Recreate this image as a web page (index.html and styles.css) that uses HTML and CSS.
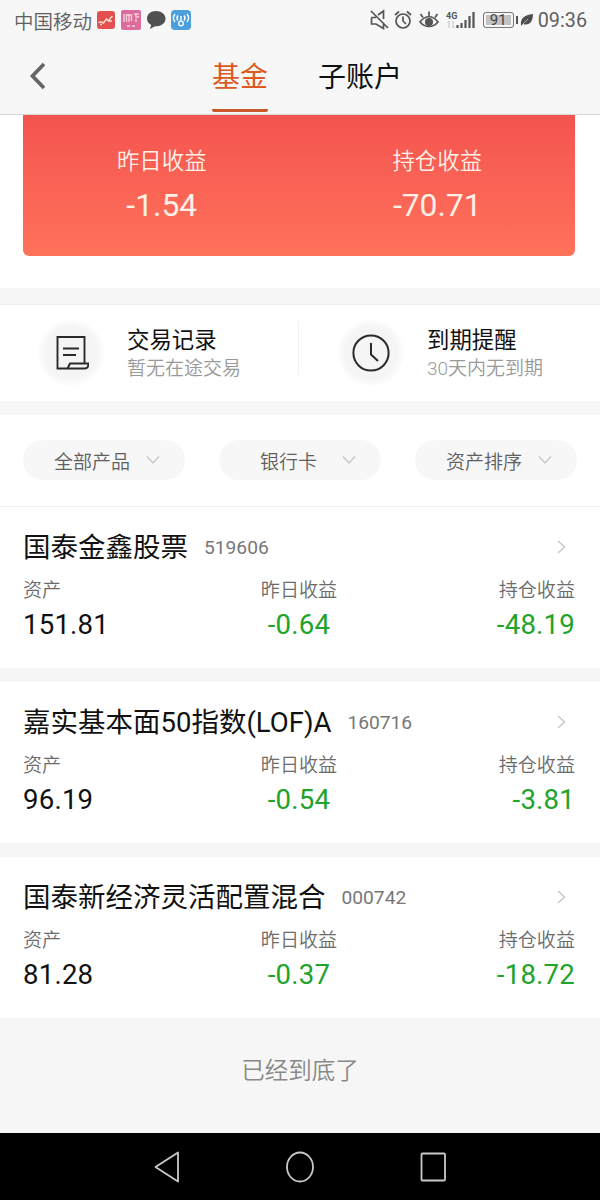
FILE: index.html
```html
<!DOCTYPE html>
<html lang="zh-CN">
<head>
  <meta charset="UTF-8">
  <meta name="viewport" content="width=device-width, initial-scale=1.0">
  <title>基金</title>
  <link rel="stylesheet" href="styles.css">
</head>
<body>
  <div class="status-bar">
    <span class="carrier">中国移动</span>
    <svg class="app-icons" width="96" height="22" viewBox="0 0 96 22">
      <rect x="1" y="2" width="18" height="18" rx="3" fill="#e4504f"/>
      <path d="M2.500 13.500l3-.5 2 1 3-4 2 2 2-3 2-2M4 15.500h2M13 12h3" fill="none" stroke="#ffd9c9" stroke-width="1.500"/>
      <rect x="25" y="1" width="20" height="20" rx="2" fill="#dc6c9b"/>
      <path d="M28 5v8M30.500 5v8M33 5v8M30.500 6h5v6M38 5h5M40 5v3h3M40 10v3M31 17h3M36 17h3" fill="none" stroke="#f7cbdc" stroke-width="1.400"/>
      <path d="M60 2c-5.500 0-9 3.500-9 7.500 0 3 1.800 5.200 4.200 6.500L54 20l5-2.700c6 .4 10.500-3 10.500-7.800C69.500 5.500 65.500 2 60 2z" fill="#505050"/>
      <rect x="75" y="1" width="20" height="20" rx="4" fill="#4b9fdd"/>
      <path d="M79 5c-2 2.500-2 5.500 0 8M82 6.500c-1.200 1.500-1.200 3.500 0 5M91 5c2 2.500 2 5.500 0 8M88 6.500c1.200 1.500 1.200 3.500 0 5M85 7v5" fill="none" stroke="#fff" stroke-width="1.400"/>
      <circle cx="85" cy="14.500" r="2.300" fill="none" stroke="#fff" stroke-width="1.300"/>
    </svg>
    <div class="status-right">
      <svg width="110" height="22" viewBox="0 0 110 22" fill="none" stroke="#555" stroke-width="1.700">
        <path d="M4 2l17 17M4.500 8.500v6.500H9l7.500 4.500v-5M4.500 8.500H9M11 6l5.500-4v8"/>
        <circle cx="36" cy="12" r="7"/>
        <path d="M36 7.500V12l3 3M28 6l4-3.500M44 6l-4-3.500"/>
        <path d="M53 13c5-7 13-7 18 0-5 6-13 6-18 0zM62 7V2.500M56 8.500L53.500 5M68 8.500L70.500 5"/>
        <circle cx="62" cy="13" r="3.200" fill="#555"/>
        <path d="M90.500 19v-3M94.500 19v-5M98.500 19v-8M102.500 19V7M106.500 19V3" stroke-width="2.200"/>
        <text class="network" x="79" y="9.500">4G</text>
        <path d="M82 12v7M80.500 14l1.500-2M86 12v7M87.500 17L86 19" stroke="#c4c4c4" stroke-width="1"/>
      </svg>
      <span class="battery">91</span>
      <svg class="leaf" width="14" height="14" viewBox="0 0 14 14">
        <path d="M1 13C0 5 4 2 13 1c0 8-4 12-10 10z" fill="#505050"/>
        <path d="M2 12l6-6" stroke="#d0d0d0" stroke-width=".7"/>
      </svg>
      <span class="clock">09:36</span>
    </div>
  </div>

  <header class="header">
    <svg class="back" width="20" height="30" viewBox="0 0 20 30">
      <path d="M17 3L5.500 15 17 27" fill="none" stroke="#666" stroke-width="3.800"/>
    </svg>
    <nav class="tabs">
      <a class="tab active">基金</a>
      <a class="tab">子账户</a>
    </nav>
  </header>

  <section class="summary">
    <div class="summary-card">
      <div class="summary-item">
        <div class="summary-label">昨日收益</div>
        <div class="summary-value">-1.54</div>
      </div>
      <div class="summary-item">
        <div class="summary-label">持仓收益</div>
        <div class="summary-value">-70.71</div>
      </div>
    </div>
  </section>

  <section class="tools">
    <div class="tool">
      <div class="tool-icon">
        <svg width="36" height="36" viewBox="0 0 36 36" fill="none" stroke="#2b2b2b" stroke-width="1.900">
          <path d="M14 33.500H4.500V2h27v26.500M10 13.500h16M10 20h13M14.500 33.500l2.500-5h18.500c0 3-1.500 5-4 5z"/>
        </svg>
      </div>
      <div class="tool-text">
        <div class="tool-title">交易记录</div>
        <div class="tool-sub">暂无在途交易</div>
      </div>
    </div>
    <div class="tool">
      <div class="tool-icon">
        <svg width="40" height="40" viewBox="0 0 40 40" fill="none" stroke="#2b2b2b" stroke-width="2">
          <circle cx="20" cy="20" r="17.600"/>
          <path d="M20 10v11.500l7 6.500"/>
        </svg>
      </div>
      <div class="tool-text">
        <div class="tool-title">到期提醒</div>
        <div class="tool-sub">30天内无到期</div>
      </div>
    </div>
  </section>

  <section class="filters">
    <div class="filter">全部产品<svg class="down" width="14" height="10" viewBox="0 0 14 10"><path d="M1 1.500l6 6.500 6-6.500"/></svg></div>
    <div class="filter filter-card">银行卡<svg class="down" width="14" height="10" viewBox="0 0 14 10"><path d="M1 1.500l6 6.500 6-6.500"/></svg></div>
    <div class="filter">资产排序<svg class="down" width="14" height="10" viewBox="0 0 14 10"><path d="M1 1.500l6 6.500 6-6.500"/></svg></div>
  </section>

  <main class="funds">
    <article class="fund">
      <div class="fund-head">
        <span class="fund-name">国泰金鑫股票</span>
        <span class="fund-code">519606</span>
        <svg class="more" width="9" height="14" viewBox="0 0 9 14"><path d="M1 1l6.500 6L1 13"/></svg>
      </div>
      <div class="fund-row">
        <div class="cell"><span class="label">资产</span><span class="value">151.81</span></div>
        <div class="cell"><span class="label">昨日收益</span><span class="value down-value">-0.64</span></div>
        <div class="cell"><span class="label">持仓收益</span><span class="value down-value">-48.19</span></div>
      </div>
    </article>

    <article class="fund">
      <div class="fund-head">
        <span class="fund-name">嘉实基本面50指数(LOF)A</span>
        <span class="fund-code">160716</span>
        <svg class="more" width="9" height="14" viewBox="0 0 9 14"><path d="M1 1l6.500 6L1 13"/></svg>
      </div>
      <div class="fund-row">
        <div class="cell"><span class="label">资产</span><span class="value">96.19</span></div>
        <div class="cell"><span class="label">昨日收益</span><span class="value down-value">-0.54</span></div>
        <div class="cell"><span class="label">持仓收益</span><span class="value down-value">-3.81</span></div>
      </div>
    </article>

    <article class="fund">
      <div class="fund-head">
        <span class="fund-name">国泰新经济灵活配置混合</span>
        <span class="fund-code">000742</span>
        <svg class="more" width="9" height="14" viewBox="0 0 9 14"><path d="M1 1l6.500 6L1 13"/></svg>
      </div>
      <div class="fund-row">
        <div class="cell"><span class="label">资产</span><span class="value">81.28</span></div>
        <div class="cell"><span class="label">昨日收益</span><span class="value down-value">-0.37</span></div>
        <div class="cell"><span class="label">持仓收益</span><span class="value down-value">-18.72</span></div>
      </div>
    </article>
  </main>

  <div class="list-end">已经到底了</div>

  <div class="nav-bar">
    <svg width="28" height="32" viewBox="0 0 28 32"><path d="M25 1.500v29L2.500 16z"/></svg>
    <svg width="30" height="32" viewBox="0 0 30 32"><ellipse cx="15" cy="16" rx="13" ry="14.500"/></svg>
    <svg width="28" height="32" viewBox="0 0 28 32"><rect x="2.500" y="2.500" width="23.500" height="27" rx="1"/></svg>
  </div>
</body>
</html>
```
FILE: styles.css
```css
* {
  box-sizing: border-box;
}
body {
  margin: 0;
  width: 600px;
  height: 1200px;
  display: flex;
  flex-direction: column;
  overflow: hidden;
  background-color: #f6f6f6;
  color: #111;
  font-family: Roboto, "Noto Sans CJK SC", sans-serif;
}
svg {
  display: block;
  flex-shrink: 0;
}

/* status bar */
.status-bar {
  display: flex;
  align-items: center;
  height: 40px;
  padding: 0 13px 0 14px;
  background-color: #f7f7f7;
  color: #606060;
  white-space: nowrap;
}
.carrier {
  font-size: 19.5px;
  font-weight: 350;
}
.app-icons {
  margin-left: 4px;
}
.status-right {
  display: flex;
  align-items: center;
  margin-left: auto;
}
.network {
  font-size: 9px;
  font-weight: bold;
  fill: #555;
  stroke: none;
}
.battery {
  position: relative;
  width: 31px;
  height: 16px;
  margin-left: 8px;
  border: 1px solid #777;
  border-radius: 3px;
  background-color: #c3c3c3;
  box-shadow: inset 0 0 0 2px #f7f7f7;
  color: #444;
  font-size: 15px;
  line-height: 15px;
  text-align: center;
}
.battery::after {
  content: "";
  position: absolute;
  right: -5px;
  top: 3px;
  width: 2px;
  height: 8px;
  background-color: #555;
}
.status-right > svg:first-child {
  margin-right: -2px;
}
.leaf {
  margin: 0 4px 0 6px;
}
.clock {
  font-size: 19.8px;
}

/* header */
.header {
  display: flex;
  height: 75px;
  border-bottom: 1px solid #d6d6d6;
  background-color: #f7f7f7;
}
.back {
  margin: 21px 0 0 27px;
}
.tabs {
  display: flex;
  gap: 50px;
  margin-left: 165px;
}
.tab {
  height: 73px;
  padding-top: 1px;
  font-size: 28px;
  line-height: 74px;
  color: #111;
}
.tab.active {
  height: 72px;
  border-bottom: 3px solid #c9592b;
  border-radius: 2px;
  color: #dc5a20;
}

/* income card */
.summary {
  height: 173px;
  padding: 0 25px 0 23px;
  background-color: #fff;
}
.summary-card {
  display: grid;
  grid-template-columns: 1fr 1fr;
  height: 141px;
  padding: 30px 0 0 1px;
  border-radius: 0 0 6px 6px;
  background: linear-gradient(#f4544f, #ff725a);
  color: #fff0e8;
  text-align: center;
}
.summary-label {
  font-size: 22.4px;
  font-weight: 350;
  line-height: 32px;
}
.summary-value {
  font-size: 31.8px;
  line-height: 36px;
  margin-top: 10px;
}

/* shortcuts */
.tools {
  display: grid;
  grid-template-columns: 299px 301px;
  height: 97px;
  margin-top: 16px;
  border-top: 1px solid #eee;
  background-color: #fff;
}
.tool {
  display: flex;
  align-items: center;
  position: relative;
  padding-left: 38px;
}
.tool:first-child::after {
  content: "";
  position: absolute;
  right: 0;
  top: 16px;
  width: 1px;
  height: 54px;
  background-color: #f0f0f0;
}
.tool:last-child {
  padding-left: 39px;
}
.tool-icon {
  display: flex;
  align-items: center;
  justify-content: center;
  width: 66px;
  height: 66px;
  margin-bottom: 1px;
  border-radius: 50%;
  background: radial-gradient(#f5f5f5 55%, #fdfdfd 71%);
}
.tool-text {
  margin-left: 23px;
}
.tool-title {
  font-size: 22.4px;
  line-height: 30px;
}
.tool-sub {
  font-size: 19px;
  font-weight: 350;
  line-height: 27px;
  color: #999;
}

/* filters */
.filters {
  display: flex;
  justify-content: space-between;
  height: 92px;
  margin-top: 14px;
  padding: 25px 23px 0;
  border-bottom: 1px solid #f0f0f0;
  background-color: #fff;
}
.filter {
  display: flex;
  align-items: center;
  justify-content: space-between;
  width: 162px;
  height: 40px;
  padding: 0 25px 0 31px;
  border-radius: 20px;
  background-color: #f7f7f7;
  color: #606060;
  font-size: 19px;
  font-weight: 350;
}
.filter-card {
  padding-left: 41px;
}
.down path,
.more path {
  fill: none;
  stroke: #c8c8c8;
  stroke-width: 1.5;
}

/* fund list */
.funds {
  display: flex;
  flex-direction: column;
  gap: 14px;
}
.fund {
  height: 161px;
  padding: 22px 25px 0 23px;
  background-color: #fff;
}
.fund-head {
  display: flex;
  align-items: center;
  height: 36px;
}
.fund-name {
  font-size: 27.5px;
  line-height: 36px;
  padding-top: 1px;
}
.fund-code {
  margin-left: 16px;
  font-size: 19.2px;
  color: #777;
}
.more {
  margin: 0 9px 1px auto;
}
.fund-row {
  display: grid;
  grid-template-columns: 1fr 1fr 1fr;
  margin-top: 12px;
}
.cell {
  display: flex;
  flex-direction: column;
}
.cell:nth-child(2) {
  align-items: center;
}
.cell:nth-child(3) {
  align-items: flex-end;
}
.label {
  font-size: 19.1px;
  font-weight: 350;
  line-height: 28px;
  color: #6c6c6c;
}
.value {
  font-size: 27.6px;
  line-height: 32px;
  margin-top: 4px;
  letter-spacing: 0.2px;
}
.down-value {
  color: #22a32a;
}

.list-end {
  flex: 1;
  padding-top: 35px;
  font-size: 23.5px;
  font-weight: 350;
  line-height: 36px;
  color: #888;
  text-align: center;
}

/* system navigation */
.nav-bar {
  display: flex;
  align-items: center;
  justify-content: center;
  gap: 104px;
  height: 67px;
  background-color: #000;
}
.nav-bar svg * {
  fill: none;
  stroke: #c9c9c9;
  stroke-width: 1.8;
  stroke-linejoin: round;
}
```
